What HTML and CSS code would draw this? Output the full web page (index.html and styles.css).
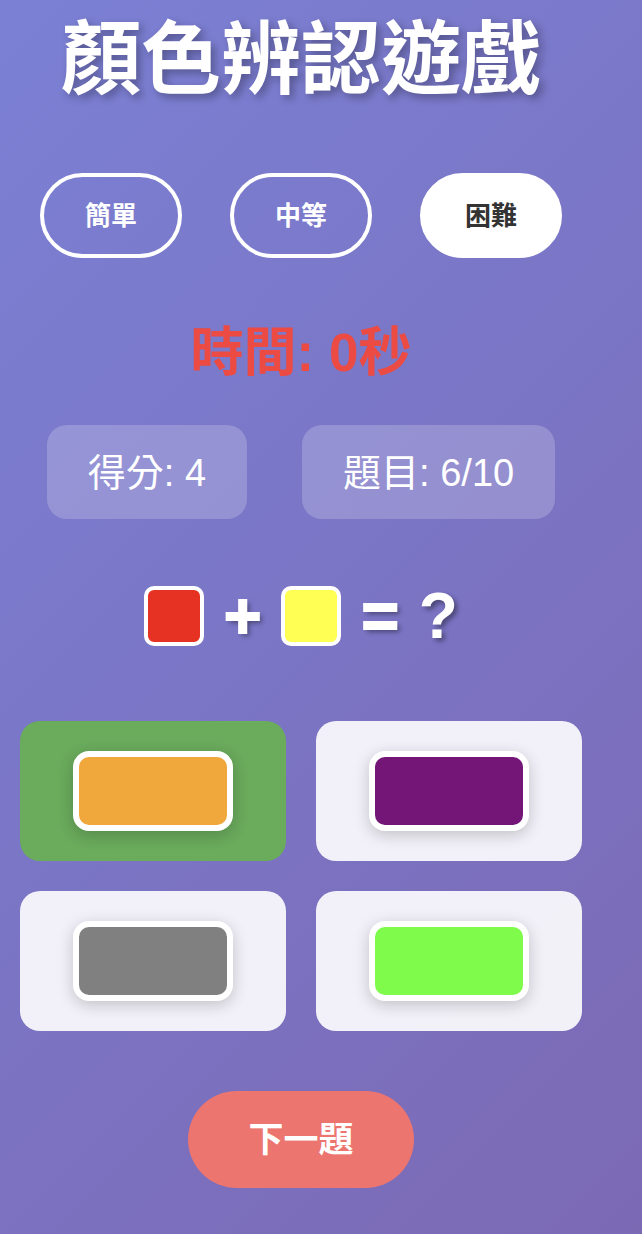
FILE: index.html
```html
<!DOCTYPE html>
<html lang="zh-Hant">
<head>
<meta charset="utf-8">
<meta name="viewport" content="width=device-width, initial-scale=1">
<title>顏色辨認遊戲</title>
<link rel="stylesheet" href="styles.css">
</head>
<body>
<main class="game">
  <h1 class="title">顏色辨認遊戲</h1>
  <div class="levels">
    <button class="level" type="button">簡單</button>
    <button class="level" type="button">中等</button>
    <button class="level level-active" type="button">困難</button>
  </div>
  <p class="timer">時間: 0秒</p>
  <div class="stats">
    <div class="stat">得分: 4</div>
    <div class="stat">題目: 6/10</div>
  </div>
  <div class="question">
    <span class="swatch red"></span>
    <span class="operator">+</span>
    <span class="swatch yellow"></span>
    <span class="operator">=</span>
    <span>?</span>
  </div>
  <div class="options">
    <button class="option option-correct" type="button" aria-label="橙色"><span class="chip orange"></span></button>
    <button class="option" type="button" aria-label="紫色"><span class="chip purple"></span></button>
    <button class="option" type="button" aria-label="灰色"><span class="chip gray"></span></button>
    <button class="option" type="button" aria-label="黃綠色"><span class="chip lime"></span></button>
  </div>
  <button class="next" type="button">下一題</button>
</main>
</body>
</html>
```
FILE: styles.css
```css
* {
  box-sizing: border-box;
}

body {
  margin: 0;
  min-height: 100vh;
  background: linear-gradient(135deg, #7b80d4 0%, #7b75c5 50%, #7c69b4 100%);
  color: #fff;
  font-family: "Liberation Sans", "Noto Sans CJK TC", sans-serif;
}

button {
  font-family: inherit;
  cursor: pointer;
}

.game {
  display: flex;
  flex-direction: column;
  align-items: center;
  padding: 0 60px 40px 20px;
}

.title {
  margin: 0 0 54px;
  font-size: 80px;
  line-height: 119px;
  white-space: nowrap;
  text-shadow: 4px 4px 8px rgba(0, 0, 0, 0.3);
}

.levels {
  display: flex;
  gap: 48px;
}

.level {
  padding: 21px 41px 19px;
  border: 4px solid #fff;
  border-radius: 50px;
  background: transparent;
  color: #fff;
  font-size: 26px;
  font-weight: bold;
  line-height: 37px;
}

.level-active {
  background: #fff;
  color: #333;
}

.timer {
  margin: 56px 0 34px;
  color: #eb4b42;
  font-size: 53px;
  font-weight: bold;
  line-height: 77px;
}

.stats {
  display: flex;
  gap: 55px;
}

.stat {
  padding: 19px 41px 17px;
  border-radius: 20px;
  background: rgba(255, 255, 255, 0.2);
  font-size: 38px;
  line-height: 58px;
}

.question {
  display: flex;
  align-items: center;
  gap: 20px;
  margin: 56px 0 64px;
  font-size: 64px;
  font-weight: bold;
  line-height: 82px;
  text-shadow: 3px 3px 5px rgba(0, 0, 0, 0.4);
}

.operator {
  -webkit-text-stroke: 2px #fff;
}

.swatch {
  width: 60px;
  height: 60px;
  border: 4px solid #fff;
  border-radius: 10px;
}

.options {
  display: grid;
  grid-template-columns: 1fr 1fr;
  gap: 30px;
  width: 100%;
}

.option {
  display: flex;
  justify-content: center;
  padding: 30px;
  border: 0;
  border-radius: 20px;
  background: rgba(255, 255, 255, 0.9);
}

.option-correct {
  background: #6aab5c;
}

.chip {
  width: 160px;
  height: 80px;
  border: 6px solid #fff;
  border-radius: 16px;
  box-shadow: 0 4px 16px rgba(0, 0, 0, 0.2);
}

.red {
  background: #e63223;
}

.yellow {
  background: #ffff54;
}

.orange {
  background: #f0a73b;
}

.purple {
  background: #741678;
}

.gray {
  background: #808080;
}

.lime {
  background: #7efb4b;
}

.next {
  margin-top: 60px;
  padding: 22px 60px;
  border: 0;
  border-radius: 50px;
  background: #ec7570;
  color: #fff;
  font-size: 35px;
  font-weight: bold;
  line-height: 53px;
}
```
